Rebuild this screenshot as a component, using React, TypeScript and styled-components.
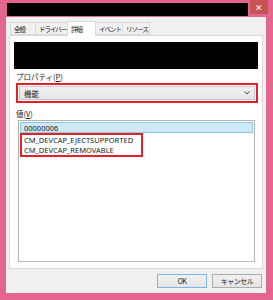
import React from "react";
import styled, { createGlobalStyle } from "styled-components";

const Global = createGlobalStyle`
  html, body { margin: 0; padding: 0; background: #e4668f; }
  * { box-sizing: border-box; }
`;

const FONT = `"Noto Sans", "Noto Sans CJK JP", sans-serif`;

const Window = styled.div`
  width: 273px;
  height: 300px;
  background: #e4668f;
  display: flex;
  flex-direction: column;
  font-family: ${FONT};
  font-size: 8px;
  color: #1a1a1a;
`;

const TitleBar = styled.div`
  height: 17px;
  display: flex;
  align-items: flex-start;
  padding: 0 5px 0 7px;
`;

const TitleText = styled.div`
  flex: 1;
  height: 13px;
  margin-top: 3px;
  background: #000;
`;

const CloseButton = styled.div`
  width: 18px;
  height: 14px;
  margin-left: 2px;
  background: #c95252;
  color: #fff;
  font-size: 9px;
  display: flex;
  align-items: center;
  justify-content: center;
  line-height: 1;
`;

const Client = styled.div`
  flex: 1;
  margin: 0 7px 7px 6px;
  background: #f0f0f0;
  display: flex;
  flex-direction: column;
  padding: 4px 3px 3px 3px;
`;

const TabRow = styled.div`
  display: flex;
  align-items: flex-end;
  height: 14px;
  padding-left: 1px;
  position: relative;
  z-index: 1;
`;

const Tab = styled.div<{ $active?: boolean; $w: number }>`
  width: ${(p) => p.$w}px;
  height: ${(p) => (p.$active ? 15 : 13)}px;
  margin-bottom: ${(p) => (p.$active ? -1 : 0)}px;
  background: ${(p) => (p.$active ? "#ffffff" : "#f0f0f0")};
  border: 1px solid #d9d9d9;
  border-bottom: ${(p) => (p.$active ? "none" : "1px solid #d9d9d9")};
  margin-right: -1px;
  display: flex;
  align-items: center;
  padding-left: 3px;
  font-family: "Noto Sans CJK JP", sans-serif;
  font-size: 6.5px;
  letter-spacing: -1px;
  color: #222;
  white-space: nowrap;
`;

const Panel = styled.div`
  height: 234px;
  background: #ffffff;
  border: 1px solid #d9d9d9;
  display: flex;
  flex-direction: column;
  padding: 6px 4px 6px 4px;
`;

const BlackBox = styled.div`
  height: 27px;
  background: #000;
`;

const Label = styled.div<{ $gap?: number }>`
  font-family: "Noto Sans CJK JP", sans-serif;
  font-size: 7.5px;
  color: #222;
  margin: ${(p) => p.$gap ?? 3}px 0 0 2px;
  line-height: 10px;
  & u { text-decoration: underline; }
`;

const RedFrame = styled.div`
  border: 2px solid #e5202a;
  margin: 1px 0 0 2px;
  padding: 1px;
`;

const Combo = styled.div`
  height: 14px;
  background: linear-gradient(#f2f2f2, #e5e5e5);
  border: 1px solid #c8c8c8;
  display: flex;
  align-items: center;
  justify-content: space-between;
  padding: 0 4px 0 4px;
  font-family: "Noto Sans CJK JP", sans-serif;
  font-size: 7.5px;
`;

const Chevron = styled.svg`
  width: 6px;
  height: 4px;
`;

const ListBox = styled.div`
  flex: 1;
  margin: 1px 3px 0 4px;
  border: 1px solid #b4b4b4;
  border-bottom-color: #bdbdbd;
  background: #fff;
  display: flex;
  flex-direction: column;
  padding: 1px;
`;

const Row = styled.div<{ $selected?: boolean }>`
  height: 11px;
  display: flex;
  align-items: center;
  padding-left: 3px;
  font-size: 7.5px;
  color: #222;
  background: ${(p) => (p.$selected ? "#cde8f7" : "transparent")};
  border: 1px solid ${(p) => (p.$selected ? "#8ec6e6" : "transparent")};
  white-space: nowrap;
`;

const HighlightGroup = styled.div`
  align-self: flex-start;
  border: 2px solid #e5202a;
  padding: 0 8px 0 0;
  & > div { height: 10px; border: none; padding-left: 2px; }
`;

const ButtonRow = styled.div`
  display: flex;
  justify-content: flex-end;
  gap: 5px;
  margin-top: 5px;
  padding-right: 1px;
`;

const Button = styled.div<{ $default?: boolean }>`
  width: 50px;
  height: 14px;
  background: linear-gradient(#f0f0f0, #e5e5e5);
  border: 1px solid ${(p) => (p.$default ? "#7eb4ea" : "#acacac")};
  display: flex;
  align-items: center;
  justify-content: center;
  font-family: "Noto Sans CJK JP", sans-serif;
  font-size: 7px;
  letter-spacing: -0.5px;
  color: #222;
`;

export default function App() {
  return (
    <>
      <Global />
      <Window>
        <TitleBar>
          <TitleText />
          <CloseButton>✕</CloseButton>
        </TitleBar>
        <Client>
          <TabRow>
            <Tab $w={26}>全般</Tab>
            <Tab $w={33}>ドライバー</Tab>
            <Tab $w={29} $active>詳細</Tab>
            <Tab $w={28}>イベント</Tab>
            <Tab $w={28}>リソース</Tab>
          </TabRow>
          <Panel>
            <BlackBox />
            <Label>
              プロパティ(<u>P</u>)
            </Label>
            <RedFrame>
              <Combo>
                <span>機能</span>
                <Chevron viewBox="0 0 6 4">
                  <path d="M0.5 0.5 L3 3 L5.5 0.5" fill="none" stroke="#444" strokeWidth="1" />
                </Chevron>
              </Combo>
            </RedFrame>
            <Label $gap={6}>
              値(<u>V</u>)
            </Label>
            <ListBox>
              <Row $selected>00000006</Row>
              <HighlightGroup>
                <Row>CM_DEVCAP_EJECTSUPPORTED</Row>
                <Row>CM_DEVCAP_REMOVABLE</Row>
              </HighlightGroup>
            </ListBox>
          </Panel>
          <ButtonRow>
            <Button $default>OK</Button>
            <Button>キャンセル</Button>
          </ButtonRow>
        </Client>
      </Window>
    </>
  );
}
